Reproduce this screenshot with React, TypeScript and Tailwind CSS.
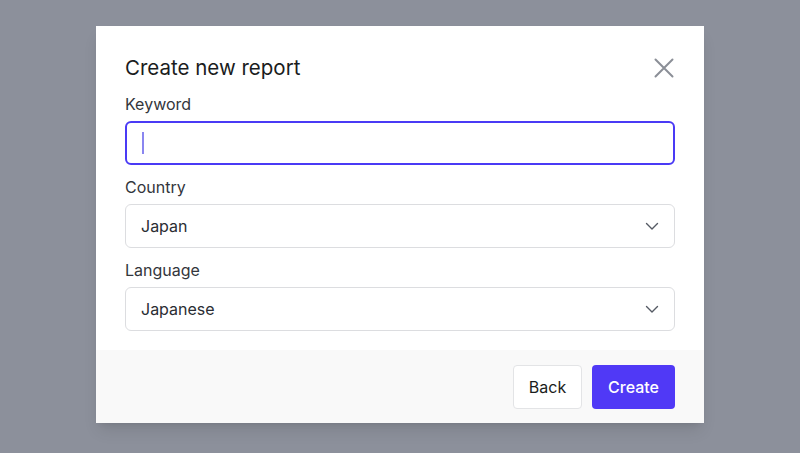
import React from "react";

function Chevron() {
  return (
    <svg width="16" height="16" viewBox="0 0 16 16" fill="none" stroke="#555a64" strokeWidth="1.4" strokeLinecap="round" strokeLinejoin="round">
      <path d="M2.5 5.5 8 11l5.5-5.5" />
    </svg>
  );
}

function Select({ value }: { value: string }) {
  return (
    <div className="flex h-[44px] items-center justify-between rounded-[6px] border border-[#dcdde0] bg-white pl-[15px] pr-[14px] text-[16px] text-[#2a2d33]">
      <span>{value}</span>
      <Chevron />
    </div>
  );
}

export default function App() {
  return (
    <div className="flex h-[453px] w-[800px] bg-[#8c909b] pl-[96px] pt-[26px]" style={{ fontFamily: "Inter, 'Noto Sans', sans-serif" }}>
      <div className="flex h-[397px] w-[608px] flex-col bg-white shadow-lg">
        <div className="flex flex-col pl-[29px] pr-[29px] pt-[28px]">
          <div className="flex h-[28px] items-center justify-between">
            <h2 className="text-[20.5px] leading-[28px] text-[#1a1c20]">Create new report</h2>
            <svg width="22" height="22" viewBox="0 0 22 22" fill="none" stroke="#8b8f97" strokeWidth="2" strokeLinecap="round">
              <path d="M2.5 2.5l17 17M19.5 2.5l-17 17" />
            </svg>
          </div>
          <label className="mt-[10px] text-[16px] leading-[24px] text-[#33363c]">Keyword</label>
          <div className="mt-[5px] flex h-[44px] items-center rounded-[6px] border-2 border-[#4a3af5] bg-white px-[15px]">
            <div className="h-[22px] w-[2px] bg-[#8a86f0]" />
          </div>
          <label className="mt-[10px] text-[16px] leading-[24px] text-[#33363c]">Country</label>
          <div className="mt-[5px]">
            <Select value="Japan" />
          </div>
          <label className="mt-[10px] text-[16px] leading-[24px] text-[#33363c]">Language</label>
          <div className="mt-[5px]">
            <Select value="Japanese" />
          </div>
        </div>
        <div className="mt-[19px] flex flex-1 items-start justify-end gap-[10px] bg-[#f9f9f9] pr-[29px] pt-[15px]">
          <button className="h-[44px] w-[69px] rounded-[4px] border border-[#e3e4e6] bg-white text-[16px] text-[#1a1c20]">Back</button>
          <button className="h-[44px] w-[83px] rounded-[4px] bg-[#5039f6] text-[16px] font-medium text-white">Create</button>
        </div>
      </div>
    </div>
  );
}
